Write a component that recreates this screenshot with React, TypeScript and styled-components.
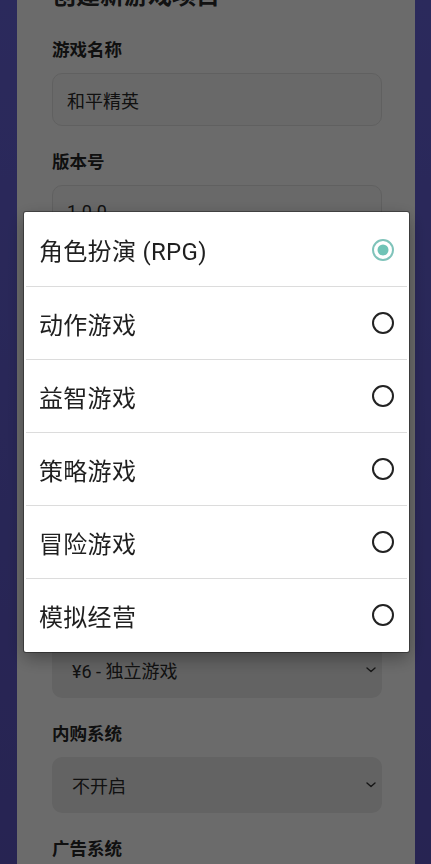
import React, { useState } from 'react';
import styled, { createGlobalStyle } from 'styled-components';

const GlobalStyle = createGlobalStyle`
  html, body {
    margin: 0;
    height: 100%;
    overflow: hidden;
  }
  body {
    background: linear-gradient(180deg, #6764dc 0%, #5d56c4 100%);
    font-family: Roboto, "Noto Sans CJK SC", "Noto Sans", sans-serif;
  }
  * {
    box-sizing: border-box;
  }
`;

const Page = styled.div`
  padding: 0 16px 0 17px;
`;

const Card = styled.div`
  margin-top: -50px;
  background: #ffffff;
  border-radius: 16px;
  padding: 30px 33px 40px 35px;
`;

const Title = styled.h2`
  margin: 0 0 27px;
  font-size: 24px;
  line-height: 32px;
  font-weight: 700;
  color: #2b2b2b;
`;

const FieldGroup = styled.div`
  margin-bottom: 25px;
`;

const Label = styled.div`
  font-size: 17.5px;
  line-height: 22px;
  font-weight: 700;
  color: #262626;
  margin-bottom: 12px;
`;

const TextInput = styled.div`
  height: 53px;
  display: flex;
  align-items: center;
  padding: 0 14px;
  border: 1.5px solid #e4e4e4;
  border-radius: 10px;
  background: #fbfbfb;
  font-size: 18px;
  color: #2a2a2a;
`;

const SelectBox = styled.div`
  height: 56px;
  display: flex;
  align-items: center;
  justify-content: space-between;
  padding: 0 5px 0 20px;
  border-radius: 10px;
  background: #ececec;
  font-size: 18px;
  color: #2a2a2a;
`;

const Overlay = styled.div`
  position: fixed;
  inset: 0;
  background: rgba(0, 0, 0, 0.58);
`;

const Popup = styled.div`
  position: fixed;
  left: 24px;
  top: 212px;
  width: 385px;
  background: #ffffff;
  border-radius: 2px;
  padding: 1px 0;
  box-shadow: 0 0 0 1px rgba(0, 0, 0, 0.35), 0 6px 18px rgba(0, 0, 0, 0.35);
`;

const OptionRow = styled.div<{ $first?: boolean }>`
  height: 73px;
  display: flex;
  align-items: center;
  justify-content: space-between;
  padding: 0 12px 0 13px;
  margin: 0 2px;
  border-top: ${p => (p.$first ? 'none' : '1px solid #dcdcdc')};
  font-size: 24px;
  color: #1f1f1f;
  cursor: pointer;
`;

const OptionText = styled.span`
  letter-spacing: 0.3px;
`;

const Chevron = () => (
  <svg width="12" height="8" viewBox="0 0 12 8">
    <path d="M2 2 L6 5.5 L10 2" fill="none" stroke="#333" strokeWidth="1.4" strokeLinecap="round" strokeLinejoin="round" />
  </svg>
);

const Radio = ({ checked }: { checked: boolean }) => (
  <svg width="24" height="24" viewBox="0 0 24 24">
    {checked ? (
      <>
        <circle cx="12" cy="12" r="10" fill="none" stroke="#7fc3ba" strokeWidth="2" />
        <circle cx="12" cy="12" r="5.5" fill="#6fc3b6" />
      </>
    ) : (
      <circle cx="12" cy="12" r="10" fill="none" stroke="#222" strokeWidth="2" />
    )}
  </svg>
);

const genres = ['角色扮演 (RPG)', '动作游戏', '益智游戏', '策略游戏', '冒险游戏', '模拟经营'];

const App: React.FC = () => {
  const [genre, setGenre] = useState(genres[0]);

  return (
    <>
      <GlobalStyle />
      <Page>
        <Card>
          <Title>创建新游戏项目</Title>
          <FieldGroup>
            <Label>游戏名称</Label>
            <TextInput>和平精英</TextInput>
          </FieldGroup>
          <FieldGroup>
            <Label>版本号</Label>
            <TextInput>1.0.0</TextInput>
          </FieldGroup>
          <FieldGroup>
            <Label>游戏类型</Label>
            <SelectBox>{genre}<Chevron /></SelectBox>
          </FieldGroup>
          <FieldGroup>
            <Label>目标平台</Label>
            <SelectBox>移动端<Chevron /></SelectBox>
          </FieldGroup>
          <FieldGroup>
            <Label>画面风格</Label>
            <SelectBox>3D写实<Chevron /></SelectBox>
          </FieldGroup>
          <FieldGroup>
            <Label>定价</Label>
            <SelectBox>¥6 - 独立游戏<Chevron /></SelectBox>
          </FieldGroup>
          <FieldGroup>
            <Label>内购系统</Label>
            <SelectBox>不开启<Chevron /></SelectBox>
          </FieldGroup>
          <FieldGroup>
            <Label>广告系统</Label>
            <SelectBox>不开启<Chevron /></SelectBox>
          </FieldGroup>
        </Card>
      </Page>
      <Overlay />
      <Popup>
        {genres.map((g, i) => (
          <OptionRow key={g} $first={i === 0} onClick={() => setGenre(g)}>
            <OptionText>{g}</OptionText>
            <Radio checked={genre === g} />
          </OptionRow>
        ))}
      </Popup>
    </>
  );
};

export default App;
